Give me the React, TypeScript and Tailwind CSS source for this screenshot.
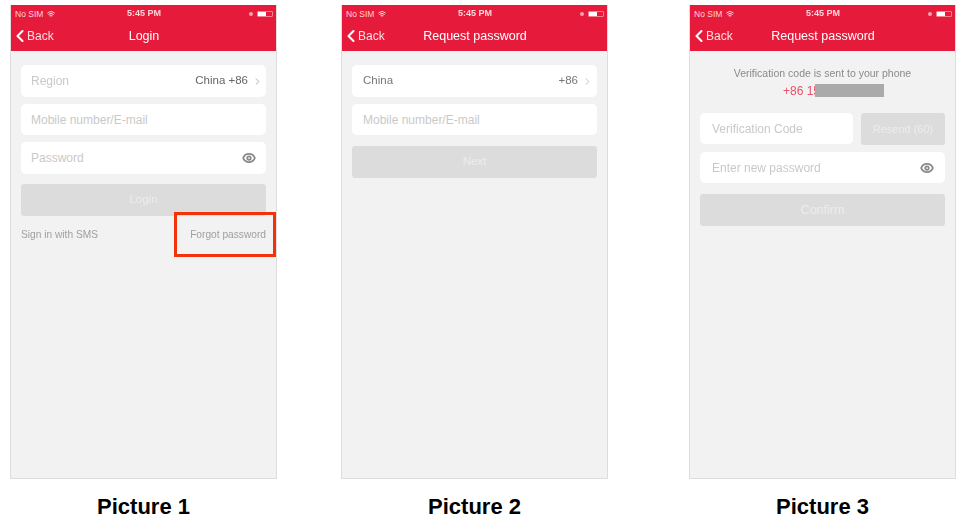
import { ChevronLeft, ChevronRight, Eye, Wifi } from 'lucide-react'
import type { ReactNode } from 'react'

function StatusBar() {
  return (
    <div className="flex h-[18px] items-center justify-between pl-[4px] pr-[3px] text-[8.5px] text-[#ffd5da]">
      <div className="flex w-[60px] items-center gap-[4px]">
        <span>No SIM</span>
        <Wifi size={8} strokeWidth={3} />
      </div>
      <span className="text-[9px] font-semibold">5:45 PM</span>
      <div className="flex w-[60px] items-center justify-end gap-[4px]">
        <span className="h-[4px] w-[4px] rounded-full bg-[#f8a5ae]" />
        <div className="flex h-[6px] w-[16px] rounded-[1px] border border-[#f3828e]">
          <div className="h-full w-[8px] bg-white" />
        </div>
      </div>
    </div>
  )
}

function Header({ title }: { title: string }) {
  return (
    <div className="h-[46px] bg-[#e61a3a]">
      <StatusBar />
      <div className="relative flex h-[26px] items-center text-white">
        <ChevronLeft size={20} strokeWidth={2.5} className="ml-[-1px]" />
        <span className="ml-[-3px] text-[12px] text-[#ffdfe2]">Back</span>
        <span className="absolute top-[4px] left-[133px] -translate-x-1/2 text-[12.5px] font-medium whitespace-nowrap">
          {title}
        </span>
      </div>
    </div>
  )
}

function Field({
  label,
  dark,
  className,
  children,
}: {
  label: string
  dark?: boolean
  className?: string
  children?: ReactNode
}) {
  return (
    <div className={`flex items-center justify-between rounded-[5px] bg-white ${className ?? ''}`}>
      <span className={`${dark ? 'text-[11.5px] text-[#777777]' : 'text-[12px] text-[#c9c9c9]'}`}>{label}</span>
      {children}
    </div>
  )
}

function GrayButton({ label, className }: { label: string; className?: string }) {
  return (
    <div className={`flex h-[32px] items-center justify-center rounded-[3px] bg-[#dcdcdc] text-[#ececec] ${className ?? ''}`}>
      {label}
    </div>
  )
}

function Phone({ caption, children, className }: { caption: string; children: ReactNode; className?: string }) {
  return (
    <div className={`flex w-[267px] shrink-0 flex-col items-center ${className ?? ''}`}>
      <div className="h-[474px] w-full border-x border-b border-[#dddddd] bg-[#f2f2f2]">{children}</div>
      <div className="mt-[14px] text-[22px] leading-[28px] font-bold text-black">{caption}</div>
    </div>
  )
}

export default function App() {
  return (
    <div className="flex h-[527px] w-[959px] overflow-hidden bg-white pt-[5px] pl-[10px] font-['Liberation_Sans',Arial,sans-serif]">
      <Phone caption="Picture 1">
        <div className="relative h-full">
          <div className="blur-[0.7px]">
            <Header title="Login" />
            <div className="flex flex-col px-[10px] pt-[14px]">
              <Field label="Region" className="h-[32px] pr-[3px] pl-[10px]">
                <div className="flex items-center gap-[4px]">
                  <span className="text-[11.5px] text-[#666666]">China +86</span>
                  <ChevronRight size={11} className="text-[#aaaaaa]" />
                </div>
              </Field>
              <Field label="Mobile number/E-mail" className="mt-[7px] h-[31px] pl-[10px]" />
              <Field label="Password" className="mt-[7px] h-[32px] pr-[10px] pl-[10px]">
                <Eye size={14} strokeWidth={3} className="text-[#8a8a8a]" />
              </Field>
              <GrayButton label="Login" className="mt-[10px] text-[11.5px]" />
              <div className="mt-[11px] flex justify-between text-[10.2px] text-[#a0a0a0]">
                <span>Sign in with SMS</span>
                <span>Forgot password</span>
              </div>
            </div>
          </div>
          <div className="absolute top-[207px] left-[163px] h-[45px] w-[102px] border-[3px] border-[#f1320b]" />
        </div>
      </Phone>

      <Phone caption="Picture 2" className="ml-[64px]">
        <div className="blur-[0.7px]">
          <Header title="Request password" />
          <div className="flex flex-col px-[10px] pt-[14px]">
            <Field label="China" dark className="h-[32px] pr-[4px] pl-[11px]">
              <div className="flex items-center gap-[4px]">
                <span className="text-[11.5px] text-[#777777]">+86</span>
                <ChevronRight size={11} className="text-[#bbbbbb]" />
              </div>
            </Field>
            <Field label="Mobile number/E-mail" className="mt-[7px] h-[31px] pl-[11px]" />
            <GrayButton label="Next" className="mt-[11px] text-[11.5px]" />
          </div>
        </div>
      </Phone>

      <Phone caption="Picture 3" className="ml-[81px]">
        <div className="blur-[0.7px]">
          <Header title="Request password" />
          <div className="flex flex-col px-[10px]">
            <div className="mt-[15px] text-center text-[10.5px] leading-[14px] text-[#8a8a8a]">
              Verification code is sent to your phone
            </div>
            <div className="mt-[2px] flex justify-center">
              <div className="relative ml-[22px] text-[12px] leading-[14px] text-[#e8506c]">
                +86 15
                <span className="ml-[-5px] inline-block h-[13px] w-[69px] translate-y-[2px] bg-[#aaaaaa]" />
              </div>
            </div>
            <div className="mt-[15px] flex gap-[8px]">
              <Field label="Verification Code" className="h-[31px] flex-1 pl-[12px]" />
              <GrayButton label="Resend (60)" className="h-[31px] w-[84px] text-[11px]" />
            </div>
            <Field label="Enter new password" className="mt-[7px] h-[31px] pr-[11px] pl-[12px]">
              <Eye size={14} strokeWidth={3} className="text-[#8a8a8a]" />
            </Field>
            <GrayButton label="Confirm" className="mt-[11px] text-[12.5px]" />
          </div>
        </div>
      </Phone>
    </div>
  )
}
